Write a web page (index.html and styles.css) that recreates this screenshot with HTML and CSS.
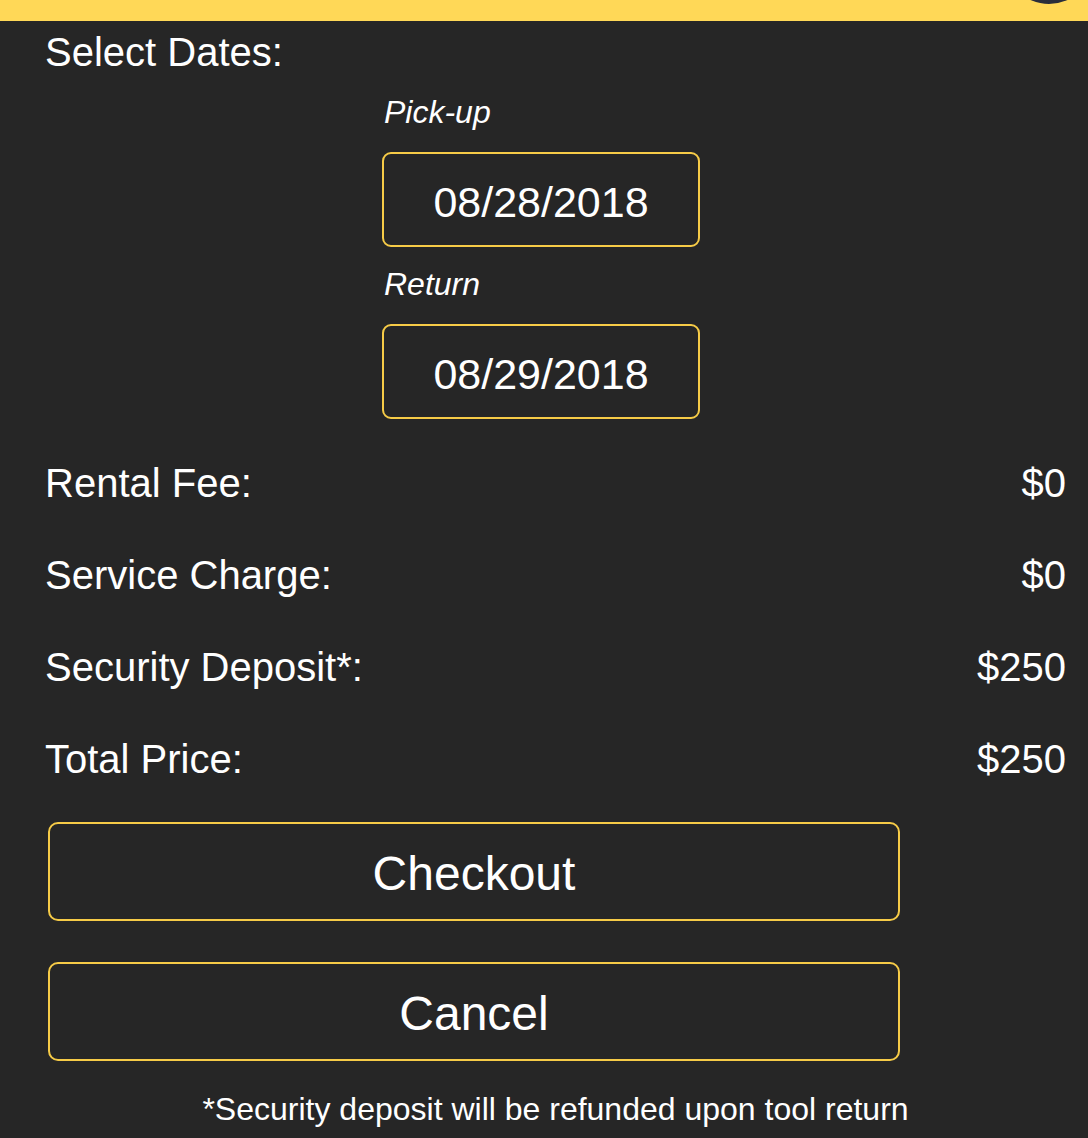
FILE: index.html
```html
<!DOCTYPE html>
<html lang="en">
<head>
<meta charset="utf-8">
<title>Select Dates</title>
<link rel="stylesheet" href="styles.css">
</head>
<body>
<header class="topbar">
  <span class="avatar"></span>
</header>
<main class="panel">
  <h2 class="section-title">Select Dates:</h2>
  <div class="dates">
    <div class="field-label">Pick-up</div>
    <div class="date-box">08/28/2018</div>
    <div class="field-label">Return</div>
    <div class="date-box">08/29/2018</div>
  </div>
  <div class="prices">
    <div class="price-row"><span>Rental Fee:</span><span>$0</span></div>
    <div class="price-row"><span>Service Charge:</span><span>$0</span></div>
    <div class="price-row"><span>Security Deposit*:</span><span>$250</span></div>
    <div class="price-row"><span>Total Price:</span><span>$250</span></div>
  </div>
  <div class="actions">
    <button class="btn">Checkout</button>
    <button class="btn">Cancel</button>
  </div>
  <p class="note">*Security deposit will be refunded upon tool return</p>
</main>
</body>
</html>
```
FILE: styles.css
```css
html, body {
  margin: 0;
  padding: 0;
  background: #262626;
  color: #ffffff;
  font-family: "Liberation Sans", Arial, Helvetica, sans-serif;
}

.topbar {
  position: relative;
  height: 21px;
  background: #ffd857;
  overflow: hidden;
}

.avatar {
  position: absolute;
  left: 1004px;
  top: -86px;
  width: 90px;
  height: 90px;
  border-radius: 50%;
  background: #2b2e3b;
}

.panel {
  padding: 0 22px 0 45px;
}

.section-title {
  margin: 8px 0 0;
  font-size: 40px;
  font-weight: normal;
  line-height: 46px;
}

.dates {
  display: flex;
  flex-direction: column;
  align-items: flex-start;
  padding-left: 337px;
}

.field-label {
  margin: 19px 0 21px 2px;
  font-size: 32px;
  font-style: italic;
  line-height: 37px;
}

.date-box {
  box-sizing: border-box;
  width: 318px;
  height: 95px;
  border: 2px solid #f6cb47;
  border-radius: 9px;
  display: flex;
  align-items: center;
  justify-content: center;
  font-size: 43px;
  padding-top: 5px;
}

.prices {
  margin-top: 18px;
}

.price-row {
  display: flex;
  justify-content: space-between;
  font-size: 40px;
  line-height: 46px;
  padding: 23px 0;
}

.actions {
  display: flex;
  flex-direction: column;
  gap: 41px;
  margin-top: 17px;
  padding-left: 3px;
}

.btn {
  box-sizing: border-box;
  width: 852px;
  height: 99px;
  background: transparent;
  border: 2px solid #f6cb47;
  border-radius: 10px;
  color: #ffffff;
  font-family: "Liberation Sans", Arial, Helvetica, sans-serif;
  font-size: 48px;
  padding: 4px 0 0;
}

.note {
  margin: 30px 0 0;
  text-align: center;
  font-size: 32px;
  line-height: 37px;
}
```
